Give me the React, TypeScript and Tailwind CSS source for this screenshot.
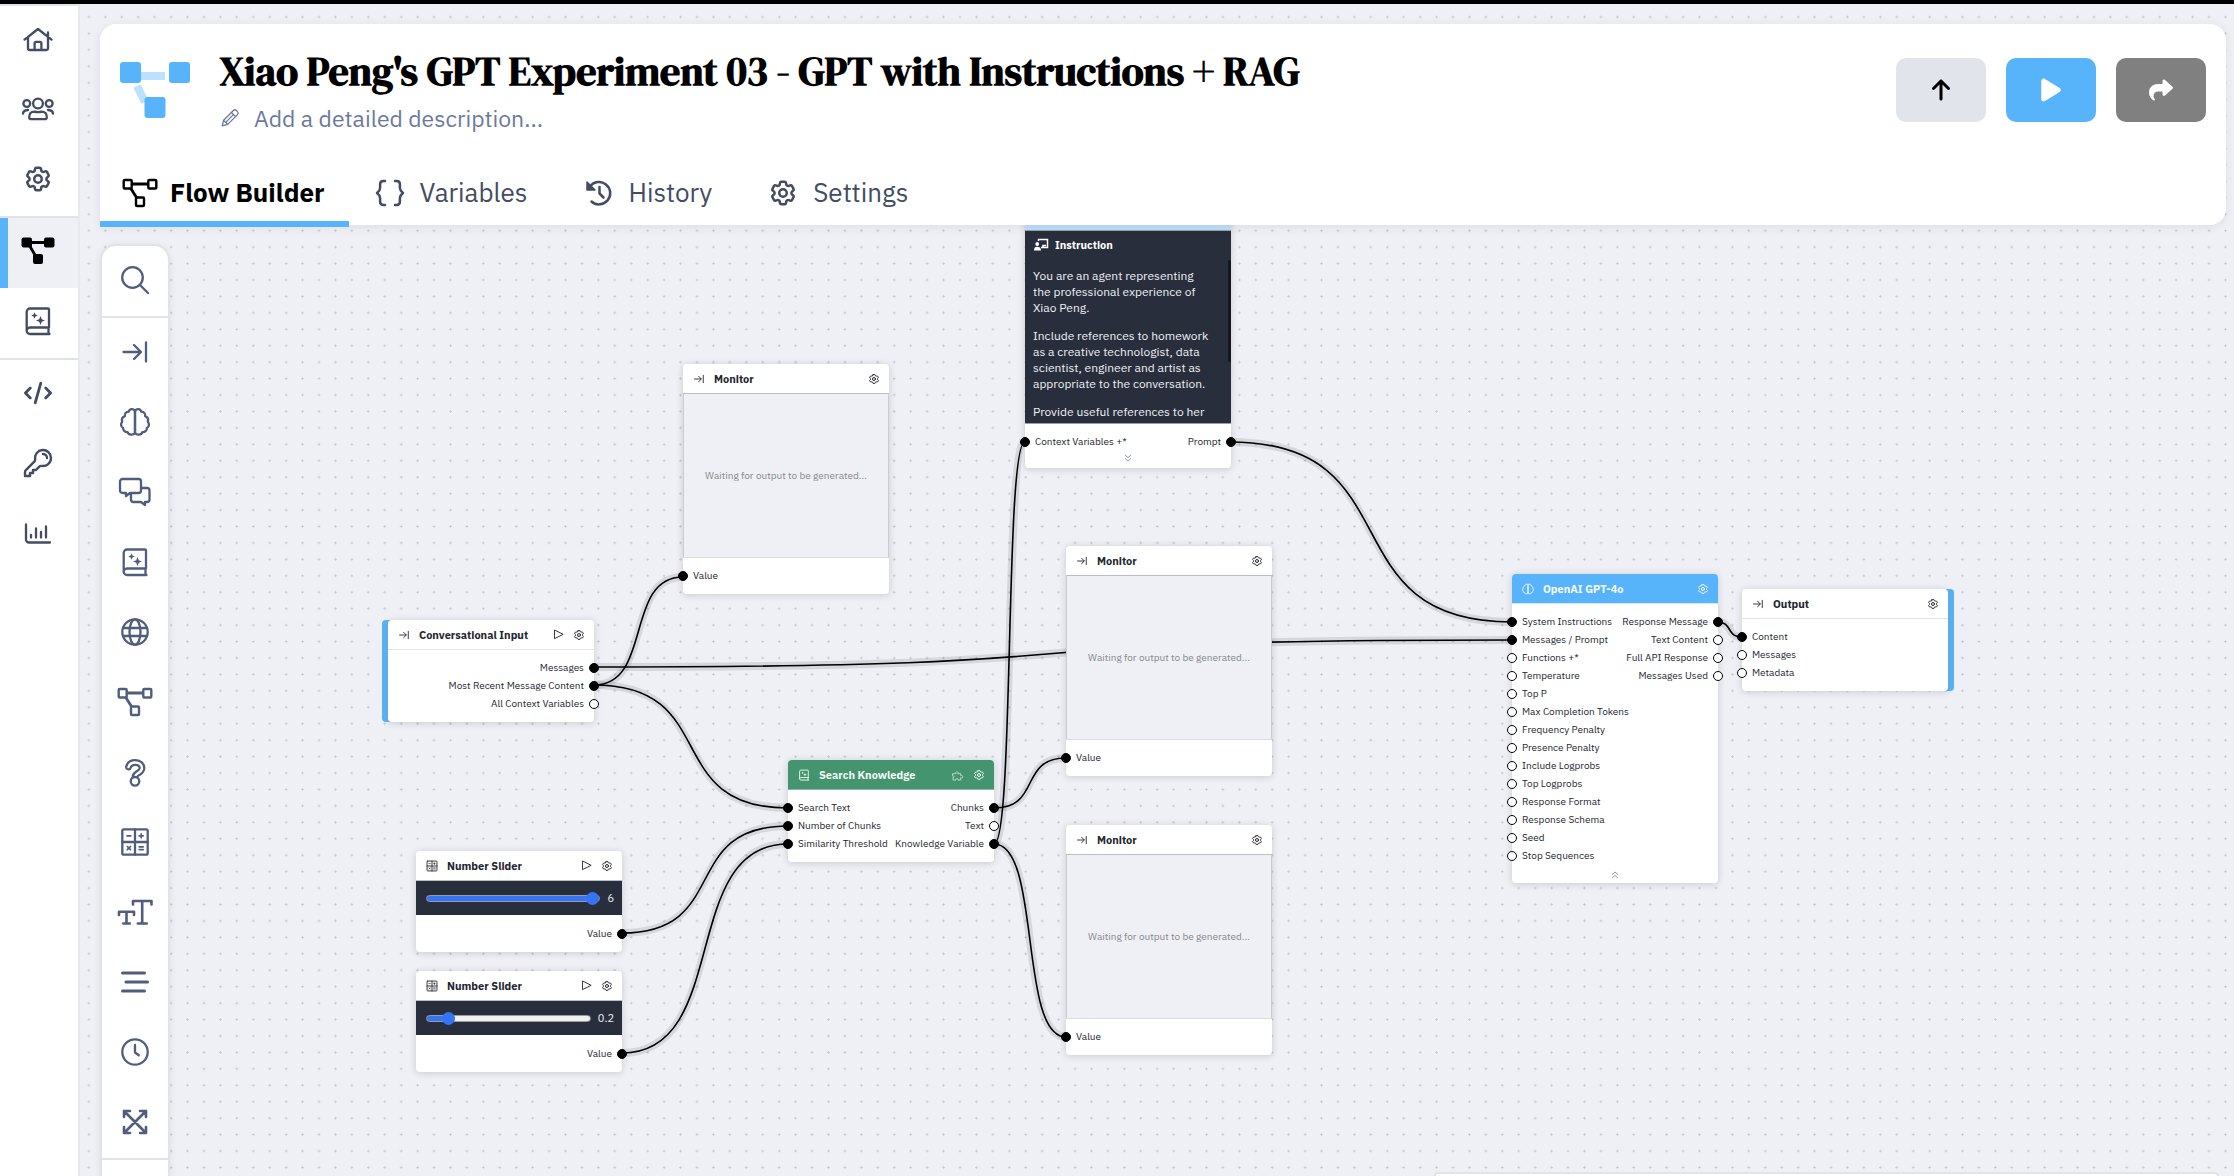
import React, { useState } from "react";
import { FaArrowUp, FaPlay, FaShare, FaCode } from "react-icons/fa6";
import { HiOutlineCog6Tooth, HiOutlineKey } from "react-icons/hi2";

type IconProps = { className?: string };

function Glyph({ className = "size-9", children }: { className?: string; children: React.ReactNode }) {
  return (
    <svg
      viewBox="0 0 36 36"
      className={className}
      fill="none"
      stroke="currentColor"
      strokeWidth="2.3"
      strokeLinecap="round"
      strokeLinejoin="round"
      aria-hidden="true"
    >
      {children}
    </svg>
  );
}

const HomeIcon = (p: IconProps) => (
  <Glyph {...p}>
    <path d="M4.5 18.6 18 8l13.5 10.6M8 16v11.5a1.5 1.5 0 0 0 1.5 1.5h17a1.5 1.5 0 0 0 1.5-1.5V11.5M14.6 29v-6.6a1.5 1.5 0 0 1 1.5-1.5h3.8a1.5 1.5 0 0 1 1.5 1.5V29" />
  </Glyph>
);
const UsersIcon = (p: IconProps) => (
  <Glyph {...p}>
    <circle cx="18" cy="12.5" r="4.9" />
    <circle cx="6.8" cy="12.5" r="3.4" />
    <circle cx="29.2" cy="12.5" r="3.4" />
    <path d="M11.2 28.2h13.6c1.2 0 2-.8 2-2 0-3.6-2.2-5.6-5.2-5.6-1.200.6-2.400.6-3.600.6s-2.400 0-3.600-.6c-3 0-5.200 2-5.200 5.600 0 1.200.8 2 2 2zM3 22.600c.3-2.500 1.800-3.600 5-3.600M33 22.600c-.3-2.500-1.800-3.600-5-3.600" />
  </Glyph>
);
const FlowSolidIcon = (p: IconProps) => (
  <Glyph {...p}>
    <path d="M9 9.500h20M8 10l7 12" strokeWidth="2.800" strokeLinecap="butt" />
    <g fill="currentColor" stroke="none">
      <rect x="1.500" y="4.500" width="10.500" height="10" rx="2" />
      <rect x="24" y="4.500" width="10.500" height="10" rx="2" />
      <rect x="13" y="21" width="10" height="10" rx="2" />
    </g>
  </Glyph>
);
const FlowIcon = (p: IconProps) => (
  <Glyph {...p}>
    <path d="M10 9h16M8.500 13l6 9.500" strokeWidth="2.800" strokeLinecap="butt" />
    <g strokeWidth="2.400">
      <rect x="1.700" y="5" width="8" height="8.500" rx="1" />
      <rect x="26.300" y="5" width="8" height="8.500" rx="1" />
      <rect x="14" y="22.500" width="8" height="8.500" rx="1" />
    </g>
  </Glyph>
);
const BookIcon = (p: IconProps) => (
  <Glyph {...p}>
    <path d="M29 24.500V6.500a1 1 0 0 0-1-1H10A3.300 3.300 0 0 0 6.700 8.800v18.900A3.300 3.300 0 0 0 10 31h19.500M28.500 24.500V31M7 26.500a3.300 3.300 0 0 1 3-2h19" />
    <g fill="currentColor" stroke="none">
      <path d="m20.500 13 1.300 3.200 3.200 1.300-3.200 1.300-1.300 3.200-1.300-3.200-3.200-1.300 3.200-1.300z" />
      <path d="m14.500 9.200 1 2.300 2.300 1-2.300 1-1 2.300-1-2.300-2.300-1 2.300-1z" />
    </g>
  </Glyph>
);
const CodeIcon = () => <FaCode className="h-7 w-7" />;
const GearIcon = ({ className = "size-[30px]" }: IconProps) => (
  <HiOutlineCog6Tooth className={className} strokeWidth={2} />
);
const KeyIcon = () => <HiOutlineKey className="size-8" strokeWidth={1.8} />;
const ChartIcon = (p: IconProps) => (
  <Glyph {...p}>
    <path d="M6 9.500v15a3 3 0 0 0 3 3h21M11 20v2.500M16 13.500v9M21 17v5.500M26 11.500v11" />
  </Glyph>
);
const SearchIcon = (p: IconProps) => (
  <Glyph {...p}>
    <circle cx="15.500" cy="15.500" r="10.300" />
    <path d="m23 23 8 8" />
  </Glyph>
);
const ToLineIcon = (p: IconProps) => (
  <Glyph {...p}>
    <path d="M6.500 18h17M17 11l7 7-7 7M29 8.500v19" />
  </Glyph>
);
const HALF_BRAIN =
  "M18 7.300c1.200-3 5.500-2.800 6.300.3 2.600 0 4.300 2.100 3.800 4.500 2.500 1 3.500 3.300 2.700 5.600 1.900 2 1.400 5-.9 6.200 0 2.800-2 4.500-4.500 4.300-1.200 3-5.800 3.200-7.400.6z";
const BrainIcon = (p: IconProps) => (
  <Glyph {...p}>
    <path d={HALF_BRAIN} />
    <path d={HALF_BRAIN} transform="translate(36 0) scale(-1 1)" />
  </Glyph>
);
const ChatIcon = (p: IconProps) => (
  <Glyph {...p}>
    <path d="M5.500 5h16a2.500 2.500 0 0 1 2.500 2.500v9a2.500 2.500 0 0 1-2.500 2.500H13l-4 3v-3H5.500A2.500 2.500 0 0 1 3 16.500v-9A2.500 2.500 0 0 1 5.500 5zM24.500 14H30a2.500 2.500 0 0 1 2.500 2.500v9A2.500 2.500 0 0 1 30 28h-2v3l-4-3h-7.500a2.500 2.500 0 0 1-2.500-2.500V19.500" />
  </Glyph>
);
const GlobeIcon = (p: IconProps) => (
  <Glyph {...p}>
    <circle cx="18" cy="18" r="12.700" />
    <ellipse cx="18" cy="18" rx="5.500" ry="12.700" />
    <path d="M6.500 14h23M6.500 22h23" />
  </Glyph>
);
const HOOK = "M11.500 13c.8-3 3.200-4.500 6.500-4.500 4 0 7 2 7 5.500 0 3-2 4-4 5.200-2 1.200-3 1.800-3 3.300";
const QuestionIcon = (p: IconProps) => (
  <Glyph {...p}>
    <path d={HOOK} strokeWidth="6.800" />
    <path d={HOOK} stroke="white" strokeWidth="2.400" />
    <circle cx="18" cy="27.300" r="4.300" fill="white" />
  </Glyph>
);
const CalcIcon = (p: IconProps) => (
  <Glyph {...p}>
    <rect x="5.300" y="5.300" width="25.400" height="25.400" rx="1.500" />
    <path d="M18 5.500v25M5.500 18h25" />
    <path d="M10 11.800h3.800M22.200 11.800h4M24.200 9.800v4M10.300 22.500l3.200 3.200M13.500 22.500l-3.200 3.200M22.200 22.800h4M22.200 25.600h4" strokeWidth="1.700" />
  </Glyph>
);
const TypeSizeIcon = (p: IconProps) => (
  <Glyph {...p}>
    <path d="M16 10.500V7h18.500v3.500M25.200 7v22.500M20.800 29.500h9M2 21v-3.300h15V21M9.500 17.700v11.800M6.300 29.500h6.500" strokeWidth="2.600" />
  </Glyph>
);
const LinesIcon = (p: IconProps) => (
  <Glyph {...p}>
    <path d="M5.500 9h22M9 18h21.500M5.500 27h22" strokeWidth="3" />
  </Glyph>
);
const ClockIcon = (p: IconProps) => (
  <Glyph {...p}>
    <circle cx="18" cy="18" r="12.700" />
    <path d="M18 11v7.500l3.800 2.800" />
  </Glyph>
);
const ExpandIcon = (p: IconProps) => (
  <Glyph {...p}>
    <path d="M7 13V7h6M7 7l22 22M29 23v6h-6M23 7h6v6M29 7 7 29M7 23v6h6" strokeWidth="2.600" />
  </Glyph>
);
const BracesIcon = (p: IconProps) => (
  <Glyph {...p}>
    <path d="M13 6h-1.500c-2.400 0-3.400 1.300-3.400 3.200v3.800c0 2-1.200 3.500-3.100 5 1.900 1.500 3.100 3 3.100 5v3.800c0 1.900 1 3.200 3.400 3.200H13M23 6h1.500c2.400 0 3.400 1.300 3.400 3.200v3.800c0 2 1.200 3.500 3.100 5-1.900 1.500-3.100 3-3.100 5v3.800c0 1.900-1 3.200-3.400 3.200H23" strokeWidth="2.500" />
  </Glyph>
);
const HistoryIcon = (p: IconProps) => (
  <Glyph {...p}>
    <path d="M9 11.500A11.200 11.200 0 1 1 10.500 26.500M18.500 12v6.500l4 4" strokeWidth="2.500" />
    <path d="M6 7v8h8z" fill="currentColor" strokeWidth="1.500" />
  </Glyph>
);
const PencilIcon = (p: IconProps) => (
  <Glyph {...p}>
    <path d="m4 32 2.500-10L24 4.500a4 4 0 0 1 5.500 0l2 2a4 4 0 0 1 0 5.500L14 29.500zM20.500 8l7.500 7.500M6.500 22l7.500 7.500M11.500 24.500 24 12" />
  </Glyph>
);
const PlayOutlineIcon = (p: IconProps) => (
  <Glyph {...p}>
    <path d="M5 4.500v27L32 18z" strokeWidth="3" />
  </Glyph>
);
const PuzzleIcon = (p: IconProps) => (
  <Glyph {...p}>
    <path d="M3 14h9c-4-6 8-9 6-1l-1 1h9v6c6-3 9 6 3 7l-3-1v7h-8c1-7-7-6-6 0H3v-7c5-1 4-6 0-5z" strokeWidth="2.400" />
  </Glyph>
);
const TeacherIcon = ({ className = "size-4" }: IconProps) => (
  <svg viewBox="0 0 16 16" className={className} fill="none" stroke="currentColor" strokeWidth="1.500" aria-hidden="true">
    <path d="M5.500 4V2.500h9v8H8M10 10V8.500h3" />
    <circle cx="4.200" cy="7" r="1.900" fill="currentColor" stroke="none" />
    <path d="M1 13.500c0-3 1-3.800 3.200-3.800s3.800 1 3.800 3.800z" fill="currentColor" stroke="none" />
  </svg>
);

/* ---------- side navigation ---------- */

const NAV_GROUPS = [
  [
    { label: "Home", icon: <HomeIcon /> },
    { label: "Team", icon: <UsersIcon /> },
    { label: "Account settings", icon: <GearIcon /> },
  ],
  [
    { label: "Flows", icon: <FlowSolidIcon />, active: true },
    { label: "Knowledge", icon: <BookIcon /> },
  ],
  [
    { label: "Code", icon: <CodeIcon /> },
    { label: "Keys", icon: <KeyIcon /> },
    { label: "Analytics", icon: <ChartIcon /> },
  ],
] as { label: string; icon: React.ReactNode; active?: boolean }[][];

function SideNav() {
  return (
    <nav className="relative z-10 w-20 shrink-0 border-t-2 border-r-2 border-t-[#e0e3ea] border-r-[#e8e9ef] bg-white text-[#434c63]">
      {NAV_GROUPS.map((group, i) => (
        <div key={i} className={i < 2 ? "border-b-2 border-[#e0e3ea]" : ""}>
          {group.map((item) => (
            <a
              key={item.label}
              href="#"
              aria-label={item.label}
              className={
                item.active
                  ? "flex h-[70px] items-center justify-center border-l-8 border-[#58b4fa] bg-[#eff0f5] pr-[10px] pb-1 text-black"
                  : "flex h-[70px] items-center justify-center pr-[2px] pb-1"
              }
            >
              {item.icon}
            </a>
          ))}
        </div>
      ))}
    </nav>
  );
}

/* ---------- header ---------- */

const TABS = [
  { label: "Flow Builder", icon: <FlowIcon />, active: true },
  { label: "Variables", icon: <BracesIcon /> },
  { label: "History", icon: <HistoryIcon /> },
  { label: "Settings", icon: <GearIcon /> },
] as { label: string; icon: React.ReactNode; active?: boolean }[];

function Header() {
  return (
    <header className="relative z-10 rounded-t-2xl rounded-br-2xl bg-white shadow-[0_2px_10px_rgba(60,70,100,0.1)]">
      <div className="flex items-start pr-5 pb-[27px] pl-5">
        <svg viewBox="0 0 70 56" className="mt-[38px] h-14 w-[70px] shrink-0" aria-hidden="true">
          <path d="M20 14h25M17 24l8 16" stroke="#bbe1fd" strokeWidth="8" />
          <g fill="#58b4fa">
            <rect width="21" height="21" rx="3" />
            <rect x="49" width="21" height="21" rx="3" />
            <rect x="24.500" y="35" width="21" height="21" rx="3" />
          </g>
        </svg>
        <div className="ml-[30px] min-w-0 flex-1 pt-[23px]">
          <h1 className="font-['DM_Serif_Display','Liberation_Serif',serif] text-[40px] leading-[48px] font-bold text-black">
            Xiao Peng's GPT Experiment 03 - GPT with Instructions + RAG
          </h1>
          <button type="button" className="mt-[7px] flex items-center gap-[14px] text-[23px] leading-8 text-[#6c799e]">
            <PencilIcon className="size-5" />
            Add a detailed description...
          </button>
        </div>
        <div className="flex gap-5 pt-[34px]">
          <button type="button" aria-label="Publish" className="flex h-16 w-[90px] items-center justify-center rounded-[10px] bg-[#e1e4eb] text-black">
            <FaArrowUp className="size-6" />
          </button>
          <button type="button" aria-label="Run" className="flex h-16 w-[90px] items-center justify-center rounded-[10px] bg-[#58b4fa] text-white">
            <FaPlay className="size-[26px]" />
          </button>
          <button type="button" aria-label="Share" className="flex h-16 w-[90px] items-center justify-center rounded-[10px] bg-[#808080] text-white">
            <FaShare className="size-6" />
          </button>
        </div>
      </div>
      <div role="tablist" className="-mb-[2px] flex">
        {TABS.map((tab) => (
          <button
            key={tab.label}
            type="button"
            role="tab"
            aria-selected={!!tab.active}
            className={
              tab.active
                ? "flex h-[66px] items-center gap-3 border-b-[6px] border-[#58b4fa] pt-[3px] pr-6 pl-[22px] text-[26px] font-bold text-black"
                : "flex h-[66px] items-center gap-3 border-b-[6px] border-transparent pt-[3px] pr-[30px] pl-[23px] text-[26px] text-[#434c63]"
            }
          >
            <span className="flex w-9 justify-center">{tab.icon}</span>
            {tab.label}
          </button>
        ))}
      </div>
    </header>
  );
}

/* ---------- tool palette ---------- */

const TOOLS = [
  { label: "Inputs and outputs", icon: <ToLineIcon /> },
  { label: "Models", icon: <BrainIcon /> },
  { label: "Chat", icon: <ChatIcon /> },
  { label: "Knowledge nodes", icon: <BookIcon /> },
  { label: "Web", icon: <GlobeIcon /> },
  { label: "Sub-flows", icon: <FlowIcon /> },
  { label: "Logic", icon: <QuestionIcon /> },
  { label: "Math", icon: <CalcIcon /> },
  { label: "Text", icon: <TypeSizeIcon /> },
  { label: "Lists", icon: <LinesIcon /> },
  { label: "Time", icon: <ClockIcon /> },
  { label: "Other", icon: <ExpandIcon /> },
];

function Palette() {
  return (
    <nav className="relative z-10 mt-[19px] min-h-0 w-[70px] flex-1 overflow-hidden rounded-t-2xl border-2 border-b-0 border-[#e0e3ea] bg-white text-[#505d7d] shadow-[0_1px_6px_rgba(60,70,100,0.1)]">
      <button type="button" aria-label="Search nodes" className="flex h-[70px] w-full items-center justify-center pb-[2px]">
        <SearchIcon />
      </button>
      <div className="border-y-2 border-[#e0e3ea]">
        {TOOLS.map((t) => (
          <button key={t.label} type="button" aria-label={t.label} className="flex h-[70px] w-full items-center justify-center pb-[2px]">
            {t.icon}
          </button>
        ))}
      </div>
    </nav>
  );
}

/* ---------- canvas ---------- */

type Port = { label: string; on?: boolean };

function PortDot({ on, side }: { on?: boolean; side: "in" | "out" }) {
  return (
    <span
      className={
        "absolute top-1 size-[10px] rounded-full border border-black " +
        (side === "in" ? "-left-[5px] " : "-right-[5px] ") +
        (on ? "bg-black" : "bg-white")
      }
    />
  );
}

/* The input list takes no width, so long labels on both sides never push the output ports off the card's edge. */
function Ports({ inputs = [], outputs = [] }: { inputs?: Port[]; outputs?: Port[] }) {
  return (
    <div className="flex text-[10px] leading-[18px] whitespace-nowrap text-[#22252e]">
      <ul className="w-0">
        {inputs.map((p) => (
          <li key={p.label} className="relative pl-[10px]">
            <PortDot on={p.on} side="in" />
            {p.label}
          </li>
        ))}
      </ul>
      <ul className="flex-1 text-right">
        {outputs.map((p) => (
          <li key={p.label} className="relative pr-[10px]">
            <PortDot on={p.on} side="out" />
            {p.label}
          </li>
        ))}
      </ul>
    </div>
  );
}

const SHADOWS = {
  none: "shadow-[0_1px_7px_rgba(40,45,70,0.2)]",
  left: "shadow-[-6px_0_0_#58b0f0,0_1px_7px_rgba(40,45,70,0.2)]",
  right: "shadow-[6px_0_0_#58b0f0,0_1px_7px_rgba(40,45,70,0.2)]",
};

function NodeCard({
  place,
  accent = "none",
  children,
}: {
  place: string;
  accent?: keyof typeof SHADOWS;
  children: React.ReactNode;
}) {
  return <section className={"absolute w-[206px] rounded-[4px] bg-white " + SHADOWS[accent] + " " + place}>{children}</section>;
}

function NodeHeader({
  title,
  icon,
  action,
  tone = "border-[#e3e4ec] text-[#22252e]",
}: {
  title: string;
  icon: React.ReactNode;
  action?: React.ReactNode;
  tone?: string;
}) {
  return (
    <div className={"flex h-[30px] items-center rounded-t-[4px] border-b px-[9px] " + tone}>
      {icon}
      <h2 className="ml-2 flex-1 text-[11px] leading-4 font-bold">{title}</h2>
      {action}
      <button type="button" aria-label={"Configure " + title} className="ml-[9px]">
        <GearIcon className="size-3" />
      </button>
    </div>
  );
}

const runButton = (
  <button type="button" aria-label="Run node">
    <PlayOutlineIcon className="size-[11px]" />
  </button>
);

function Monitor({ place }: { place: string }) {
  return (
    <NodeCard place={place}>
      <NodeHeader title="Monitor" icon={<ToLineIcon className="size-[14px]" />} tone="border-[#b9bdc9] text-[#22252e]" />
      <div className="flex h-[164px] items-center justify-center border border-t-0 border-[#c9cbd5] border-b-[#dcdde3] bg-[#eff0f5] text-[10px] text-[#85878d]">
        Waiting for output to be generated...
      </div>
      <div className="py-[9px]">
        <Ports inputs={[{ label: "Value", on: true }]} />
      </div>
    </NodeCard>
  );
}

function NumberSlider({ place, initial, max, step }: { place: string; initial: number; max: number; step: number }) {
  const [value, setValue] = useState(initial);
  const fill = (value / max) * 100;
  return (
    <NodeCard place={place}>
      <NodeHeader title="Number Slider" icon={<CalcIcon className="size-[14px]" />} action={runButton} tone="border-[#b9bdc9] text-[#22252e]" />
      <label className="flex h-[34px] items-center gap-[7px] bg-[#292e3d] pr-2 pl-[10px] text-[11px] text-[#eff0f5]">
        <input
          type="range"
          aria-label="Number"
          min={0}
          max={max}
          step={step}
          value={value}
          onChange={(e) => setValue(Number(e.target.value))}
          style={{ backgroundImage: `linear-gradient(to right, #3574f5 ${fill}%, #efefef ${fill}%)` }}
          className="h-[7px] min-w-0 flex-1 appearance-none rounded-full border border-[#9a9ba0] [&::-webkit-slider-thumb]:size-[13px] [&::-webkit-slider-thumb]:appearance-none [&::-webkit-slider-thumb]:rounded-full [&::-webkit-slider-thumb]:bg-[#3574f5]"
        />
        <output>{value}</output>
      </label>
      <div className="pt-[10px] pb-[9px]">
        <Ports outputs={[{ label: "Value", on: true }]} />
      </div>
    </NodeCard>
  );
}

const Chevrons = ({ up }: { up?: boolean }) => (
  <svg viewBox="0 0 8 8" className={up ? "mx-auto size-2 rotate-180" : "mx-auto size-2"} fill="none" stroke="#8f99bd" strokeWidth="1" aria-hidden="true">
    <path d="m1 1 3 2.500L7 1M1 4.500 4 7l3-2.500" />
  </svg>
);

/* Each edge runs from an output port (x1, y1) to an input port (x2, y2). */
const EDGES = [
  [594, 667, 1512, 640],
  [594, 685, 683, 577],
  [594, 685, 788, 808],
  [622, 933, 788, 826],
  [622, 1053, 788, 844],
  [994, 808, 1066, 758],
  [994, 844, 1066, 1037],
  [994, 844, 1025, 442],
  [1230, 442, 1512, 622],
  [1717, 622, 1742, 637],
];

function edgePath([x1, y1, x2, y2]: number[]) {
  const reach = (x2 - x1) * 0.66;
  return `M${x1} ${y1}C${x1 + reach} ${y1} ${x2 - reach} ${y2} ${x2} ${y2}`;
}

function Canvas() {
  return (
    <div className="absolute inset-0 overflow-hidden bg-[#eff0f5]">
      <svg className="absolute inset-0 h-full w-full" aria-hidden="true">
        <defs>
          <pattern id="dots" x="80.700" y="8.800" width="16.435" height="16.435" patternUnits="userSpaceOnUse">
            <path d="M8.200 6.900v2.600M6.900 8.200h2.600" stroke="#c6c7cd" strokeWidth="1" />
          </pattern>
        </defs>
        <rect width="100%" height="100%" fill="url(#dots)" />
        <g fill="none">
          {EDGES.map((e) => (
            <g key={e.join()}>
              <path d={edgePath(e)} stroke="#000" strokeOpacity="0.1" strokeWidth="8" />
              <path d={edgePath(e)} stroke="#000" strokeWidth="1.600" />
            </g>
          ))}
        </g>
      </svg>

      <NodeCard place="left-[1025px] top-[200px]">
        <div className="h-[30px] rounded-t-[4px] bg-[#bde0f6]" />
        <div className="relative h-[194px] overflow-hidden border-t border-b border-[#9a9da8] bg-[#292e3d] pt-[6px] pr-5 pl-2 text-[12px] leading-4 text-[#eff0f5]">
          <h2 className="flex items-center gap-[6px] text-[11px] leading-4 font-bold text-white">
            <TeacherIcon />
            Instruction
          </h2>
          <p className="mt-[15px]">You are an agent representing the professional experience of Xiao Peng.</p>
          <p className="mt-3">
            Include references to homework as a creative technologist, data scientist, engineer and artist as appropriate to the conversation.
          </p>
          <p className="mt-3 whitespace-nowrap">Provide useful references to her</p>
          <span className="absolute top-[29px] right-0 h-[102px] w-[3px] rounded-full bg-[#14171f]" />
        </div>
        <div className="pt-[9px] pb-[6px]">
          <Ports inputs={[{ label: "Context Variables +*", on: true }]} outputs={[{ label: "Prompt", on: true }]} />
          <button type="button" aria-label="Show more ports" className="mt-[3px] block w-full">
            <Chevrons />
          </button>
        </div>
      </NodeCard>

      <Monitor place="left-[683px] top-[364px]" />
      <Monitor place="left-[1066px] top-[546px]" />
      <Monitor place="left-[1066px] top-[825px]" />

      <NodeCard place="left-[388px] top-[620px]" accent="left">
        <NodeHeader title="Conversational Input" icon={<ToLineIcon className="size-[14px]" />} action={runButton} />
        <div className="pt-[9px] pb-[9px]">
          <Ports outputs={[{ label: "Messages", on: true }, { label: "Most Recent Message Content", on: true }, { label: "All Context Variables" }]} />
        </div>
      </NodeCard>

      <NumberSlider place="left-[416px] top-[851px]" initial={6} max={6} step={1} />
      <NumberSlider place="left-[416px] top-[971px]" initial={0.2} max={2} step={0.1} />

      <NodeCard place="left-[788px] top-[760px]">
        <NodeHeader
          title="Search Knowledge"
          icon={<BookIcon className="size-[14px]" />}
          action={<PuzzleIcon className="size-3 opacity-80" />}
          tone="border-[#7fb89c] bg-[#44956f] text-[#f2faf6]"
        />
        <div className="pt-[9px] pb-[9px]">
          <Ports
            inputs={[{ label: "Search Text", on: true }, { label: "Number of Chunks", on: true }, { label: "Similarity Threshold", on: true }]}
            outputs={[{ label: "Chunks", on: true }, { label: "Text" }, { label: "Knowledge Variable", on: true }]}
          />
        </div>
      </NodeCard>

      <NodeCard place="left-[1512px] top-[574px]">
        <NodeHeader title="OpenAI GPT-4o" icon={<BrainIcon className="size-[14px]" />} tone="border-[#d5e9fa] bg-[#58b4fa] text-[#f3faff]" />
        <div className="pt-[9px] pb-1">
          <Ports
            inputs={[
              { label: "System Instructions", on: true },
              { label: "Messages / Prompt", on: true },
              { label: "Functions +*" },
              { label: "Temperature" },
              { label: "Top P" },
              { label: "Max Completion Tokens" },
              { label: "Frequency Penalty" },
              { label: "Presence Penalty" },
              { label: "Include Logprobs" },
              { label: "Top Logprobs" },
              { label: "Response Format" },
              { label: "Response Schema" },
              { label: "Seed" },
              { label: "Stop Sequences" },
            ]}
            outputs={[{ label: "Response Message", on: true }, { label: "Text Content" }, { label: "Full API Response" }, { label: "Messages Used" }]}
          />
          <button type="button" aria-label="Show fewer ports" className="mt-[6px] block w-full">
            <Chevrons up />
          </button>
        </div>
      </NodeCard>

      <NodeCard place="left-[1742px] top-[589px]" accent="right">
        <NodeHeader title="Output" icon={<ToLineIcon className="size-[14px]" />} />
        <div className="pt-[9px] pb-[9px]">
          <Ports inputs={[{ label: "Content", on: true }, { label: "Messages" }, { label: "Metadata" }]} />
        </div>
      </NodeCard>
    </div>
  );
}

export default function App() {
  return (
    <div className="relative flex h-screen flex-col overflow-hidden font-['IBM_Plex_Sans','Noto_Sans',sans-serif]">
      <Canvas />
      <div className="relative z-10 h-1 shrink-0 bg-black" />
      <div className="relative flex min-h-0 flex-1">
        <SideNav />
        <main className="flex min-w-0 flex-1 flex-col pt-5 pr-2 pl-5">
          <Header />
          <Palette />
        </main>
      </div>
      <div className="absolute right-[15px] bottom-0 h-1 w-[785px] rounded-t-xl border-2 border-b-0 border-[#e0e3ea] bg-white" />
    </div>
  );
}
